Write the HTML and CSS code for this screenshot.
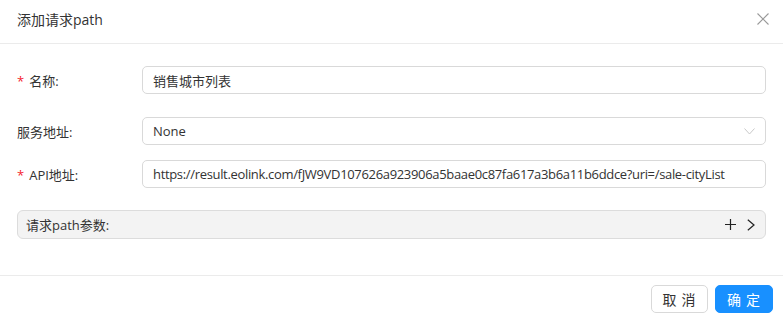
FILE: index.html
```html
<!DOCTYPE html>
<html lang="zh-CN">
<head>
    <meta charset="UTF-8">
    <title>添加请求path</title>
    <link rel="stylesheet" href="styles.css">
</head>
<body>
    <div class="modal">
        <div class="modal-header">
            <span class="modal-title">添加请求path</span>
            <svg class="close" width="12" height="12" viewBox="0 0 12 12">
                <path d="M0.5 0.5 L11.5 11.5 M11.5 0.5 L0.5 11.5" stroke="#999" stroke-width="1.1" fill="none"/>
            </svg>
        </div>

        <div class="modal-body">
            <div class="form-row row-name">
                <label class="label"><span class="req">*</span>名称:</label>
                <div class="input">销售城市列表</div>
            </div>
            <div class="form-row row-server">
                <label class="label">服务地址:</label>
                <div class="input select">
                    <span>None</span>
                    <svg width="11" height="7" viewBox="0 0 11 7">
                        <path d="M0.5 0.5 L5.5 6 L10.5 0.5" stroke="#c8c8c8" stroke-width="1" fill="none"/>
                    </svg>
                </div>
            </div>
            <div class="form-row row-api">
                <label class="label"><span class="req">*</span>API地址:</label>
                <div class="input url">https://result.eolink.com/fJW9VD107626a923906a5baae0c87fa617a3b6a11b6ddce?uri=/sale-cityList</div>
            </div>
            <div class="params-bar">
                <span>请求path参数:</span>
                <div class="params-actions">
                    <svg width="11" height="11" viewBox="0 0 11 11">
                        <path d="M5.5 0 V11 M0 5.5 H11" stroke="#222" stroke-width="1.2" fill="none"/>
                    </svg>
                    <svg width="8" height="12" viewBox="0 0 8 12">
                        <path d="M0.8 0.8 L7 6 L0.8 11.2" stroke="#222" stroke-width="1.2" fill="none"/>
                    </svg>
                </div>
            </div>
        </div>

        <div class="modal-footer">
            <button class="btn">取 消</button>
            <button class="btn btn-primary">确 定</button>
        </div>
    </div>
</body>
</html>
```

FILE: styles.css
```css
body {
    margin: 0;
    background: #fff;
    color: #333;
    font-family: "Open Sans", "Noto Sans CJK SC", sans-serif;
    font-size: 13px;
}

.modal {
    width: 783px;
}

.modal-header {
    height: 43px;
    padding: 0 14px 0 17px;
    display: flex;
    align-items: center;
    justify-content: space-between;
    border-bottom: 1px solid #ebebeb;
}

.modal-title {
    font-size: 14px;
    color: #333;
    margin-top: -5px;
}

.close {
    margin-top: -5px;
}

.modal-body {
    padding: 22px 17px 36px 17px;
}

.form-row {
    display: flex;
    align-items: center;
}

.row-name {
    margin-bottom: 23px;
}

.row-server {
    margin-bottom: 15px;
}

.row-api {
    margin-bottom: 22px;
}

.label {
    width: 125px;
    flex-shrink: 0;
    color: #333;
}

.req {
    color: #f5222d;
    margin-right: 5px;
}

.input {
    flex: 1;
    height: 26px;
    border: 1px solid #d9d9d9;
    border-radius: 5px;
    padding: 0 10px;
    display: flex;
    align-items: center;
    white-space: nowrap;
    overflow: hidden;
}

.url {
    letter-spacing: -0.33px;
}

.select {
    justify-content: space-between;
}

.params-bar {
    height: 27px;
    border: 1px solid #dcdcdc;
    border-radius: 6px;
    background: #f3f3f3;
    padding: 0 10px 0 8px;
    display: flex;
    align-items: center;
    justify-content: space-between;
}

.params-actions {
    display: flex;
    align-items: center;
    gap: 11px;
}

.modal-footer {
    border-top: 1px solid #ebebeb;
    padding: 9px 10px 0 0;
    display: flex;
    justify-content: flex-end;
    gap: 7px;
}

.btn {
    height: 28px;
    width: 57px;
    border: 1px solid #d9d9d9;
    border-radius: 5px;
    background: #fff;
    color: #333;
    font-family: "Noto Sans CJK SC", sans-serif;
    font-size: 14px;
    padding: 0;
    letter-spacing: 1px;
}

.btn-primary {
    width: 58px;
    background: #1890ff;
    border-color: #1890ff;
    color: #fff;
}
```
